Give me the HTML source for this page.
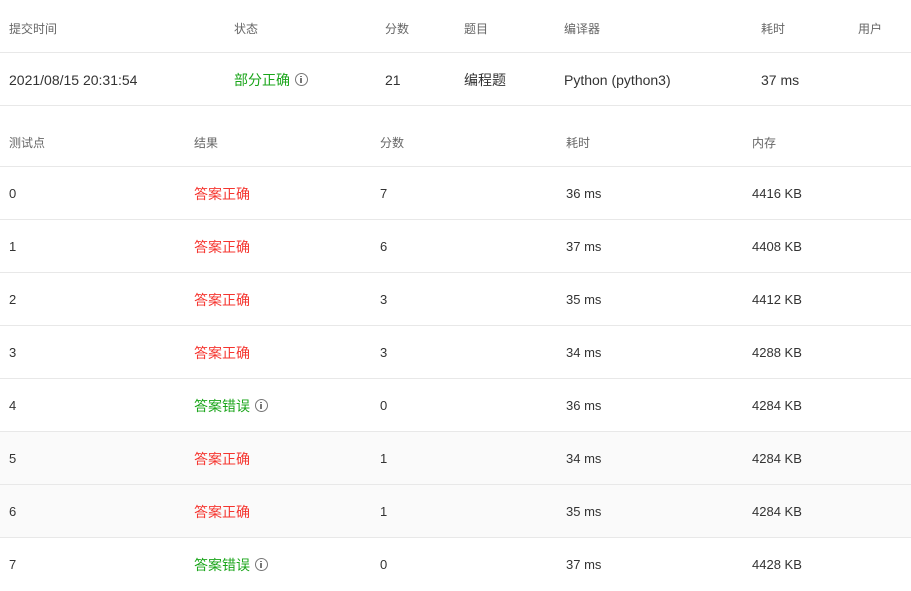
<!DOCTYPE html>
<html><head><meta charset="utf-8"><style>
body{margin:0;width:911px;height:585px;overflow:hidden;background:#fff;font-family:"Liberation Sans","Noto Sans CJK SC",sans-serif;color:#333;font-size:13px}
.r{position:relative;border-bottom:1px solid #e8e8e8;box-sizing:border-box}
.r span{position:absolute;white-space:nowrap;line-height:20px}
.r span.c{font-family:"Noto Sans CJK SC",sans-serif;font-size:14px;line-height:20px;margin-top:0}
.h span.c{font-size:12px;margin-top:1px}
.h{color:#666;font-size:12px}
.red{color:#f5352f}.grn{color:#1aa51a}
.i{display:inline-block;width:13px;height:13px;border:1.3px solid #777;border-radius:50%;box-sizing:border-box;vertical-align:-1px;margin-left:5px;position:relative}
.i:before{content:"";position:absolute;left:4.4px;top:1.7px;width:1.6px;height:1.6px;background:#777}
.i:after{content:"";position:absolute;left:4.4px;top:4.3px;width:1.6px;height:4.5px;background:#777}
.alt{background:#fafafa}
</style></head><body>
<div class="r h" style="height:53px"><span class="c" style="left:9px;top:18px">提交时间</span><span class="c" style="left:234px;top:18px">状态</span><span class="c" style="left:385px;top:18px">分数</span><span class="c" style="left:464px;top:18px">题目</span><span class="c" style="left:564px;top:18px">编译器</span><span class="c" style="left:761px;top:18px">耗时</span><span class="c" style="left:858px;top:18px">用户</span></div>
<div class="r" style="height:53px"><span style="left:9px;top:17px;font-size:14px">2021/08/15 20:31:54</span><span class="c grn" style="left:234px;top:17px">部分正确<i class="i"></i></span><span style="left:385px;top:17px;font-size:14px">21</span><span class="c" style="left:464px;top:17px">编程题</span><span style="left:564px;top:17px;font-size:14px">Python (python3)</span><span style="left:761px;top:17px;font-size:14px">37 ms</span></div>
<div class="r h" style="height:61px"><span class="c" style="left:9px;top:26px">测试点</span><span class="c" style="left:194px;top:26px">结果</span><span class="c" style="left:380px;top:26px">分数</span><span class="c" style="left:566px;top:26px">耗时</span><span class="c" style="left:752px;top:26px">内存</span></div>
<div class="r" style="height:53px"><span style="left:9px;top:17px">0</span><span class="c red" style="left:194px;top:17px">答案正确</span><span style="left:380px;top:17px">7</span><span style="left:566px;top:17px">36 ms</span><span style="left:752px;top:17px">4416 KB</span></div>
<div class="r" style="height:53px"><span style="left:9px;top:17px">1</span><span class="c red" style="left:194px;top:17px">答案正确</span><span style="left:380px;top:17px">6</span><span style="left:566px;top:17px">37 ms</span><span style="left:752px;top:17px">4408 KB</span></div>
<div class="r" style="height:53px"><span style="left:9px;top:17px">2</span><span class="c red" style="left:194px;top:17px">答案正确</span><span style="left:380px;top:17px">3</span><span style="left:566px;top:17px">35 ms</span><span style="left:752px;top:17px">4412 KB</span></div>
<div class="r" style="height:53px"><span style="left:9px;top:17px">3</span><span class="c red" style="left:194px;top:17px">答案正确</span><span style="left:380px;top:17px">3</span><span style="left:566px;top:17px">34 ms</span><span style="left:752px;top:17px">4288 KB</span></div>
<div class="r" style="height:53px"><span style="left:9px;top:17px">4</span><span class="c grn" style="left:194px;top:17px">答案错误<i class="i"></i></span><span style="left:380px;top:17px">0</span><span style="left:566px;top:17px">36 ms</span><span style="left:752px;top:17px">4284 KB</span></div>
<div class="r alt" style="height:53px"><span style="left:9px;top:17px">5</span><span class="c red" style="left:194px;top:17px">答案正确</span><span style="left:380px;top:17px">1</span><span style="left:566px;top:17px">34 ms</span><span style="left:752px;top:17px">4284 KB</span></div>
<div class="r alt" style="height:53px"><span style="left:9px;top:17px">6</span><span class="c red" style="left:194px;top:17px">答案正确</span><span style="left:380px;top:17px">1</span><span style="left:566px;top:17px">35 ms</span><span style="left:752px;top:17px">4284 KB</span></div>
<div class="r" style="height:53px;border:0"><span style="left:9px;top:17px">7</span><span class="c grn" style="left:194px;top:17px">答案错误<i class="i"></i></span><span style="left:380px;top:17px">0</span><span style="left:566px;top:17px">37 ms</span><span style="left:752px;top:17px">4428 KB</span></div>
</body></html>
